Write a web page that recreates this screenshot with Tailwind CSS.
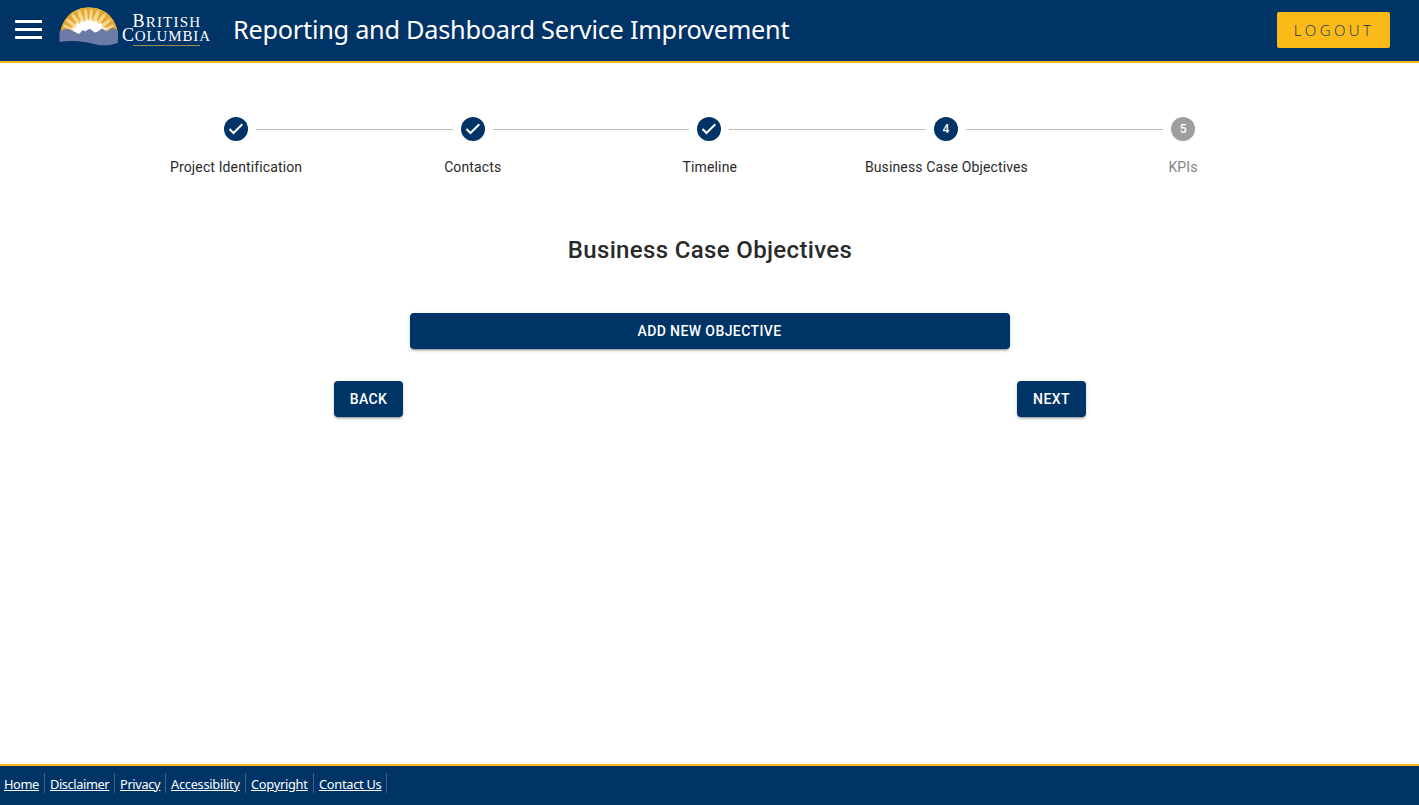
<!DOCTYPE html>
<html lang="en">
<head>
<meta charset="utf-8">
<title>Reporting and Dashboard Service Improvement</title>
<script src="https://cdn.jsdelivr.net/npm/@tailwindcss/browser@4"></script>
</head>
<body class="flex h-screen flex-col overflow-hidden bg-white font-['Roboto',sans-serif] text-[#2a2a2a]">
<header class="flex h-[63px] shrink-0 items-center border-b-2 border-[#fcba19] bg-[#003366] pr-[29px] pb-[2px] pl-[15px]">
  <button aria-label="Menu" class="flex w-[27px] flex-col gap-[5px]">
    <span class="h-[3px] bg-white"></span><span class="h-[3px] bg-white"></span><span class="h-[3px] bg-white"></span>
  </button>
  <svg class="ml-4 h-[59px] w-[156px] shrink-0" viewBox="58 0 156 59" aria-label="British Columbia">
    <defs><clipPath id="dome"><path d="M60 38V37C60.500 20 72 7.500 89 7.500S117.500 20 118 37V38Z"/></clipPath></defs>
    <g clip-path="url(#dome)">
      <rect x="58" y="6" width="62" height="36" fill="#f6d894"/>
      <path fill="#e3a82b" d="M88.500 21L86 5H91ZM85 21L77.500 5L84 5ZM92 21L93 5H99.500ZM81 23L68 7L75 5ZM96 23L102 5L109 7ZM78 26L60 13L66 7ZM99 26L111 7L117 13ZM75 29L55 21L59 14ZM102 29L118 14L122 21ZM73 32L56 29V22ZM104 32L121 22V29ZM72 36L56 37V30.500ZM105 36L121 30.500V37Z"/>
      <path fill="none" stroke="#e3a82b" stroke-width="3" opacity=".7" d="M60 37C60 20 72 8.500 88.500 8.500S117 20 117 37"/>
      <path d="M70 35L74 31L72 28L76 27L76 23L80 24L81 21L85 22L87 19L89 21L91 19L93 22L97 21L98 24L102 23L102 27L106 28L104 31L108 35Z" fill="#fff"/>
    </g>
    <path d="M59.500 31.500C63 30 66 28 69 29L76 32.500L79 34L83 30L85 31.500L89.500 28.800L95 32.500L97 32L102 28.500L107 31.500L111 28.500C114 27.500 116 29 118 31L117.800 43C111 45.500 103 46 96 44.500C84 41.500 75 40 59.500 42Z" fill="#6b7ba6"/>
    <g fill="#fff" font-family="'Liberation Serif', serif">
      <text x="132.500" y="26.700" font-size="18" textLength="67.500">B<tspan font-size="15">RITISH</tspan></text>
      <text x="122" y="41" font-size="18" textLength="88">C<tspan font-size="15">OLUMBIA</tspan></text>
    </g>
    <path d="M133 45.500H200" stroke="#9c8f45" stroke-width="1"/>
  </svg>
  <h1 class="mt-[-2px] ml-[19px] font-['Noto_Sans',sans-serif] text-[25.300px] leading-[36px] tracking-[-0.260px] whitespace-nowrap text-white">Reporting and Dashboard Service Improvement</h1>
  <button class="ml-auto h-9 w-[113px] rounded-[2px] bg-[#fcba19] pt-px pl-px font-['Open_Sans',sans-serif] text-[15px] font-light tracking-[3.400px] text-[#003366]">LOGOUT</button>
</header>

<main class="flex flex-1 flex-col items-center">
  <ol class="mt-[54px] mr-[0.300px] grid w-[1183px] grid-cols-5 text-center text-sm leading-5 tracking-[0.130px]">
    <li>
      <div class="flex h-6 items-center gap-2"><span class="flex-1"></span><svg class="size-6" viewBox="0 0 24 24"><circle cx="12" cy="12" r="12" fill="#003366"/><path d="m5.500 12 4 4 8.800-8.800" fill="none" stroke="#fff" stroke-width="2"/></svg><span class="h-px flex-1 bg-[#bdbdbd]"></span></div>
      <p class="mt-4">Project Identification</p>
    </li>
    <li>
      <div class="flex h-6 items-center gap-2"><span class="h-px flex-1 bg-[#bdbdbd]"></span><svg class="size-6" viewBox="0 0 24 24"><circle cx="12" cy="12" r="12" fill="#003366"/><path d="m5.500 12 4 4 8.800-8.800" fill="none" stroke="#fff" stroke-width="2"/></svg><span class="h-px flex-1 bg-[#bdbdbd]"></span></div>
      <p class="mt-4">Contacts</p>
    </li>
    <li>
      <div class="flex h-6 items-center gap-2"><span class="h-px flex-1 bg-[#bdbdbd]"></span><svg class="size-6" viewBox="0 0 24 24"><circle cx="12" cy="12" r="12" fill="#003366"/><path d="m5.500 12 4 4 8.800-8.800" fill="none" stroke="#fff" stroke-width="2"/></svg><span class="h-px flex-1 bg-[#bdbdbd]"></span></div>
      <p class="mt-4 pl-px">Timeline</p>
    </li>
    <li>
      <div class="flex h-6 items-center gap-2"><span class="h-px flex-1 bg-[#bdbdbd]"></span><span class="size-6 rounded-full bg-[#003366] text-xs leading-6 font-medium tracking-normal text-white">4</span><span class="h-px flex-1 bg-[#bdbdbd]"></span></div>
      <p class="mt-4 pl-px">Business Case Objectives</p>
    </li>
    <li>
      <div class="flex h-6 items-center gap-2"><span class="h-px flex-1 bg-[#bdbdbd]"></span><span class="size-6 rounded-full bg-[#9e9e9e] pl-px text-xs leading-6 font-medium tracking-normal text-white">5</span><span class="flex-1"></span></div>
      <p class="mt-4 pl-px text-[#858585]">KPIs</p>
    </li>
  </ol>
  <h2 class="mt-[53px] pl-px text-2xl leading-10 font-medium tracking-[0.350px]">Business Case Objectives</h2>
  <button class="mt-[43px] h-9 w-[600px] rounded bg-[#003366] text-sm font-medium tracking-[0.400px] text-white shadow-[0_3px_1px_-2px_rgba(0,0,0,0.2),0_2px_2px_rgba(0,0,0,0.14),0_1px_5px_rgba(0,0,0,0.12)]">ADD NEW OBJECTIVE</button>
  <div class="mt-8 flex w-[752px] justify-between">
    <button class="h-9 w-[69px] rounded bg-[#003366] pl-px text-sm font-medium tracking-[0.400px] text-white shadow-[0_3px_1px_-2px_rgba(0,0,0,0.2),0_2px_2px_rgba(0,0,0,0.14),0_1px_5px_rgba(0,0,0,0.12)]">BACK</button>
    <button class="h-9 w-[69px] rounded bg-[#003366] pl-px text-sm font-medium tracking-[0.400px] text-white shadow-[0_3px_1px_-2px_rgba(0,0,0,0.2),0_2px_2px_rgba(0,0,0,0.14),0_1px_5px_rgba(0,0,0,0.12)]">NEXT</button>
  </div>
</main>

<footer class="h-[41px] shrink-0 border-t-2 border-[#fcba19] bg-[#003366] pt-[7px]">
  <nav class="flex h-5 font-['Noto_Sans',sans-serif] text-[12.800px] leading-[23px] tracking-[-0.270px] whitespace-nowrap text-white underline">
    <a class="w-[45px] border-r border-[#4b5e7e] pl-1 tracking-[-0.400px]">Home</a>
    <a class="w-[70px] border-r border-[#4b5e7e] pl-[5px] tracking-[-0.400px]">Disclaimer</a>
    <a class="w-[51px] border-r border-[#4b5e7e] pl-[5px] tracking-[-0.350px]">Privacy</a>
    <a class="w-20 border-r border-[#4b5e7e] pl-[5px]">Accessibility</a>
    <a class="w-[68px] border-r border-[#4b5e7e] pl-[5px]">Copyright</a>
    <a class="w-[73px] border-r border-[#4b5e7e] pl-[5px]">Contact Us</a>
  </nav>
</footer>
</body>
</html>
